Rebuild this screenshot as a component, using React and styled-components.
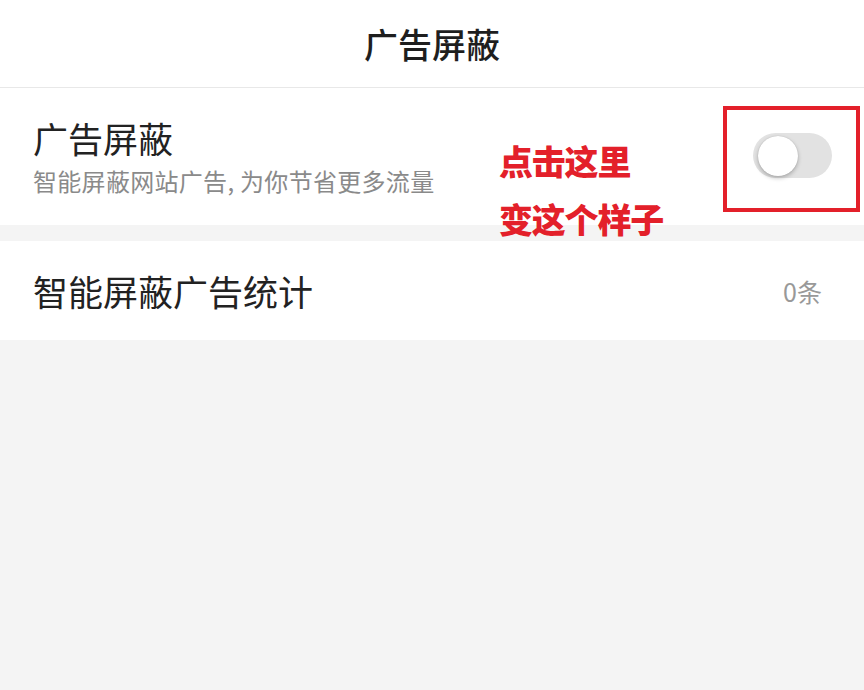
import React from "react";
import styled, { createGlobalStyle } from "styled-components";

const Global = createGlobalStyle`
  html, body { margin: 0; padding: 0; background: #f4f4f4; }
  body { font-family: "Noto Sans CJK SC", "Noto Sans", sans-serif; }
`;

const Page = styled.div`
  width: 864px;
  height: 690px;
  background: #f4f4f4;
  position: relative;
  overflow: hidden;
`;

const Header = styled.header`
  height: 87px;
  background: #fff;
  border-bottom: 1px solid #e8e8e8;
  display: flex;
  align-items: center;
  justify-content: center;
  font-size: 34px;
  font-weight: 500;
  color: #1e1e1e;
`;

const Section = styled.section`
  background: #fff;
  display: flex;
  align-items: center;
  justify-content: space-between;
  padding: 0 32px 0 33px;
  height: ${(p) => p.$h}px;
  margin-top: ${(p) => p.$mt || 0}px;
  position: relative;
`;

const TextCol = styled.div`
  display: flex;
  flex-direction: column;
`;

const Title = styled.div`
  font-size: 35px;
  color: #222;
  line-height: 40px;
`;

const Sub = styled.div`
  font-size: 24px;
  color: #8a8a8a;
  line-height: 30px;
  margin-top: 8px;
  letter-spacing: 0.3px;
`;

const Count = styled.div`
  font-size: 25px;
  color: #999;
  margin-right: 10px;
`;

const Track = styled.div`
  width: 79px;
  height: 45px;
  border-radius: 23px;
  background: #e2e2e2;
  display: flex;
  align-items: center;
  padding-left: 5px;
  box-sizing: border-box;
`;

const Knob = styled.div`
  width: 40px;
  height: 40px;
  border-radius: 50%;
  background: #fff;
  box-shadow: 0 2px 4px rgba(0, 0, 0, 0.25), 0 0 1px rgba(0, 0, 0, 0.2);
`;

const HighlightBox = styled.div`
  position: absolute;
  left: 723px;
  top: 106px;
  width: 137px;
  height: 106px;
  border: 4px solid #e3202a;
  box-sizing: border-box;
  display: flex;
  align-items: flex-start;
  justify-content: center;
  padding-top: 23px;
  padding-left: 2px;
`;

const Note = styled.div`
  position: absolute;
  left: 499px;
  top: ${(p) => p.$top}px;
  font-size: 34px;
  font-weight: 900;
  color: #e3202a;
  line-height: 40px;
  letter-spacing: -1.2px;
`;

export default function App() {
  return (
    <Page>
      <Global />
      <Header>广告屏蔽</Header>
      <Section $h={137}>
        <TextCol>
          <Title>广告屏蔽</Title>
          <Sub>智能屏蔽网站广告, 为你节省更多流量</Sub>
        </TextCol>
      </Section>
      <Section $h={99} $mt={16}>
        <Title>智能屏蔽广告统计</Title>
        <Count>0条</Count>
      </Section>
      <HighlightBox>
        <Track>
          <Knob />
        </Track>
      </HighlightBox>
      <Note $top={141}>点击这里</Note>
      <Note $top={199}>变这个样子</Note>
    </Page>
  );
}
